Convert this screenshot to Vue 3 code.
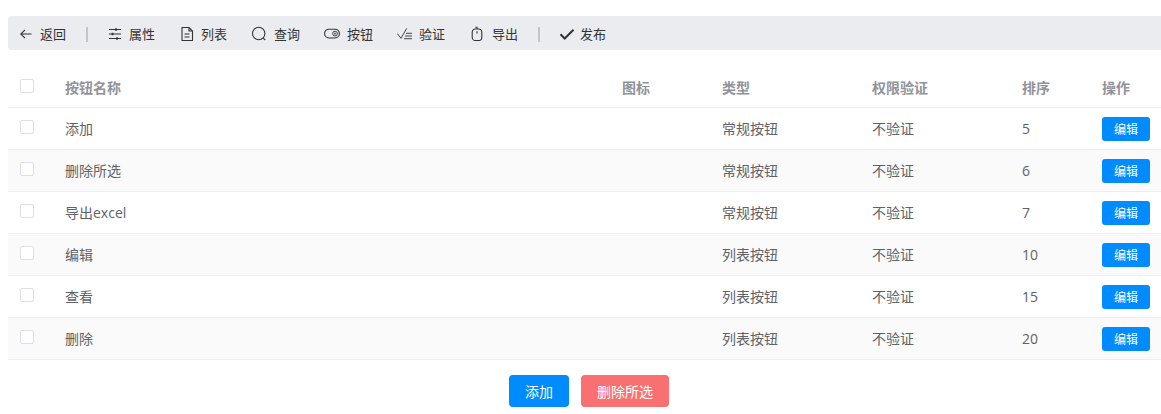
<template>
  <div class="page">
    <div class="toolbar">
      <template v-for="item in tools" :key="item.label">
        <span v-if="item.sep" class="sep"></span>
        <span class="tool" :style="{ gap: item.gap + 'px' }">
          <svg viewBox="0 -1 16 16" width="16" height="16" fill="none" stroke="#333" stroke-width="1.1" v-html="item.icon"></svg>
          <span>{{ item.label }}</span>
        </span>
      </template>
    </div>

    <table class="grid">
      <colgroup>
        <col style="width: 45px" />
        <col />
        <col style="width: 100px" />
        <col style="width: 150px" />
        <col style="width: 150px" />
        <col style="width: 80px" />
        <col style="width: 80px" />
      </colgroup>
      <thead>
        <tr>
          <th><span class="check"></span></th>
          <th>按钮名称</th>
          <th>图标</th>
          <th>类型</th>
          <th>权限验证</th>
          <th>排序</th>
          <th>操作</th>
        </tr>
      </thead>
      <tbody>
        <tr v-for="row in rows" :key="row.name">
          <td><span class="check"></span></td>
          <td>{{ row.name }}</td>
          <td></td>
          <td>{{ row.type }}</td>
          <td>不验证</td>
          <td class="sort">{{ row.sort }}</td>
          <td><button class="edit">编辑</button></td>
        </tr>
      </tbody>
    </table>

    <div class="actions">
      <button class="btn blue">添加</button>
      <button class="btn red">删除所选</button>
    </div>
  </div>
</template>

<script setup>
const tools = [
  { label: '返回', gap: 6, icon: '<path d="M13.5 8H2.8M7 3.8 2.8 8 7 12.2"/>' },
  { label: '属性', gap: 6, sep: true, icon: '<path d="M2 3.5h12M2 8h12M2 12.5h12"/><path d="M9 2.3v2.4M5.5 6.8v2.4M10 11.3v2.4" stroke-width="1.8"/>' },
  { label: '列表', gap: 6, icon: '<path d="M3 1.5h7l3.5 3.5v9.5H3zM10 1.5V5h3.5M5.5 8h5M5.5 11h5"/>' },
  { label: '查询', gap: 7, icon: '<circle cx="7.7" cy="7.5" r="6.2"/><path d="m12 11.8 2.2 2.2"/>' },
  { label: '按钮', gap: 7, icon: '<rect x="0.6" y="3.2" width="14.8" height="8.8" rx="4.4"/><circle cx="11" cy="7.6" r="2.4" stroke-width="0.9"/><circle cx="11" cy="7.6" r="0.7" stroke-width="0.8"/>' },
  { label: '验证', gap: 6, icon: '<path d="M0.3 7.5 4 12.3 9.7 2.3M9 7.3h6M8 10h7M7 12.7h8" stroke-width="0.9"/>' },
  { label: '导出', gap: 7, icon: '<rect x="3.2" y="3" width="9.6" height="11.6" rx="3.4"/><path d="M8 3V1.2H6.4M8 5.2v2.4"/>' },
  { label: '发布', gap: 5, sep: true, icon: '<path d="m1.5 8.3 4.2 4.2L14.5 3.7" stroke-width="2"/>' }
]

const rows = [
  { name: '添加', type: '常规按钮', sort: 5 },
  { name: '删除所选', type: '常规按钮', sort: 6 },
  { name: '导出excel', type: '常规按钮', sort: 7 },
  { name: '编辑', type: '列表按钮', sort: 10 },
  { name: '查看', type: '列表按钮', sort: 15 },
  { name: '删除', type: '列表按钮', sort: 20 }
]
</script>

<style>
html, body { margin: 0; background: #fff; overflow: hidden; }
</style>

<style scoped>
/* the content runs a little past the window on the right */
.page {
  width: 1162px;
  padding: 16px 0 0 8px;
  font-family: "Open Sans", "Noto Sans CJK SC", sans-serif;
  font-size: 14px;
  color: #606266;
}
.toolbar {
  display: flex;
  align-items: center;
  gap: 24px;
  height: 34px;
  padding-left: 10px;
  background: #ebecf0;
  border-radius: 4px;
  font-size: 13px;
  color: #333;
}
.tool { display: flex; align-items: center; }
.sep {
  width: 2px;
  height: 15px;
  margin: 2px -5px 0 -4px;
  background: #c2c5cb;
}
.grid {
  width: 100%;
  margin-top: 16px;
  border-collapse: collapse;
  table-layout: fixed;
}
th, td {
  height: 39px;
  padding: 0 12px 2px;
  text-align: left;
  border-bottom: 1px solid #ebeef5;
}
th {
  height: 41px;
  padding-bottom: 0;
  color: #909399;
  font-weight: 700;
}
td.sort { height: 41px; padding-bottom: 0; }
tbody tr:nth-child(even) td { background: #fafafa; }
.check {
  display: block;
  width: 12px;
  height: 12px;
  margin-top: -1px;
  border: 1px solid #dcdfe6;
  border-radius: 2px;
  background: #fff;
}
.edit {
  display: block;
  width: 48px;
  height: 24px;
  margin-top: 2px;
  padding: 0;
  border: 0;
  border-radius: 3px;
  background: #008cff;
  color: #fff;
  font: inherit;
  font-size: 12px;
}
.actions {
  display: flex;
  justify-content: center;
  gap: 12px;
  margin-top: 15px;
}
.btn {
  height: 32px;
  padding: 0 16px;
  border: 0;
  border-radius: 4px;
  color: #fff;
  font: inherit;
  font-size: 14px;
}
.blue { background: #008cff; }
.red { background: #f87072; }
</style>
